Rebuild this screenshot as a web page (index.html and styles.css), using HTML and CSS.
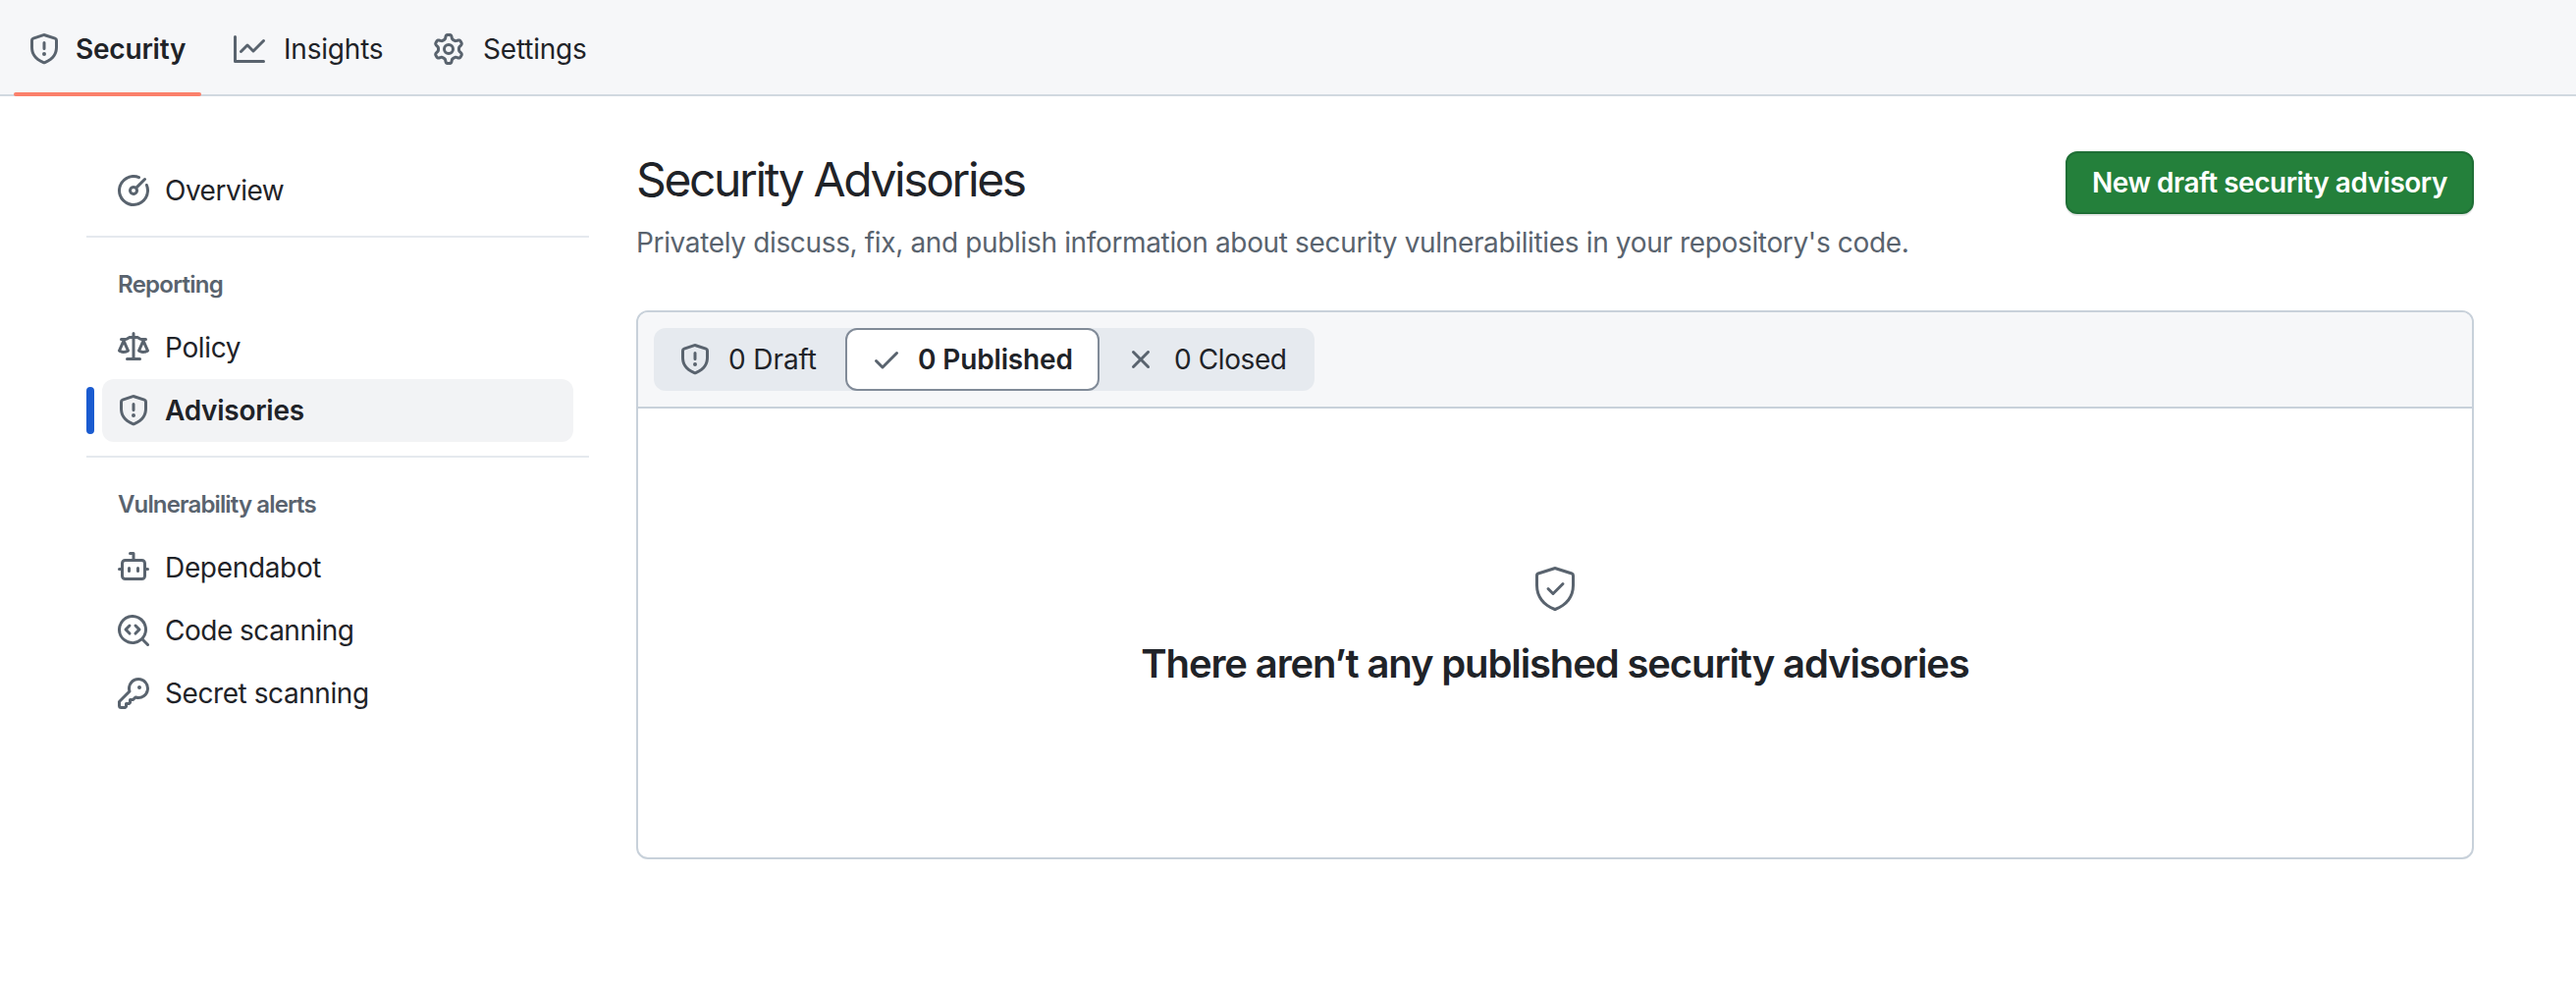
FILE: index.html
```html
<!DOCTYPE html>
<html lang="en">
<head>
<meta charset="utf-8">
<title>Security Advisories</title>
<link rel="stylesheet" href="styles.css">
</head>
<body>
<svg class="sprite" aria-hidden="true">
  <symbol id="shield" viewBox="0 0 16 16"><path d="M7.467.133a1.748 1.748 0 0 1 1.066 0l5.25 1.68A1.75 1.75 0 0 1 15 3.48V7c0 1.566-.32 3.182-1.303 4.682-.983 1.498-2.585 2.813-5.032 3.855a1.697 1.697 0 0 1-1.33 0c-2.447-1.042-4.049-2.357-5.032-3.855C1.32 10.182 1 8.566 1 7V3.48a1.755 1.755 0 0 1 1.217-1.667Zm.61 1.429a.25.25 0 0 0-.153 0l-5.25 1.68a.25.25 0 0 0-.174.238V7c0 1.358.275 2.666 1.057 3.86.784 1.194 2.121 2.34 4.366 3.297a.196.196 0 0 0 .154 0c2.245-.956 3.582-2.104 4.366-3.298C13.225 9.666 13.5 8.36 13.5 7V3.48a.251.251 0 0 0-.174-.237l-5.25-1.68ZM8.75 4.75v3a.75.75 0 0 1-1.5 0v-3a.75.75 0 0 1 1.5 0ZM9 10.5a1 1 0 1 1-2 0 1 1 0 0 1 2 0Z"/></symbol>
</svg>

<nav class="topnav">
  <a class="tab tab-security selected"><svg class="icon"><use href="#shield"/></svg><span>Security</span></a>
  <a class="tab tab-insights"><svg class="icon" viewBox="0 0 16 16"><path d="M1.5 1.75V13.5h13.75a.75.75 0 0 1 0 1.5H.75a.75.75 0 0 1-.75-.75V1.75a.75.75 0 0 1 1.5 0Zm14.28 2.53-5.25 5.25a.75.75 0 0 1-1.06 0L7 7.06 4.28 9.78a.751.751 0 0 1-1.042-.018.751.751 0 0 1-.018-1.042l3.25-3.25a.75.75 0 0 1 1.06 0L10 7.94l4.72-4.72a.751.751 0 0 1 1.042.018.751.751 0 0 1 .018 1.042Z"/></svg><span>Insights</span></a>
  <a class="tab tab-settings"><svg class="icon" viewBox="0 0 16 16"><path d="M8 0a8.2 8.2 0 0 1 .701.031C9.444.095 9.99.645 10.16 1.29l.288 1.107c.018.066.079.158.212.224.231.114.454.243.668.386.123.082.233.09.299.071l1.103-.303c.644-.176 1.392.021 1.82.63.27.385.506.792.704 1.218.315.675.111 1.422-.364 1.891l-.814.806c-.049.048-.098.147-.088.294.016.257.016.515 0 .772-.01.147.038.246.088.294l.814.806c.475.469.679 1.216.364 1.891a7.977 7.977 0 0 1-.704 1.217c-.428.61-1.176.807-1.82.63l-1.102-.302c-.067-.019-.177-.011-.3.071a5.909 5.909 0 0 1-.668.386c-.133.066-.194.158-.211.224l-.29 1.106c-.168.646-.715 1.196-1.458 1.26a8.006 8.006 0 0 1-1.402 0c-.743-.064-1.289-.614-1.458-1.26l-.289-1.106c-.018-.066-.079-.158-.212-.224a5.738 5.738 0 0 1-.668-.386c-.123-.082-.233-.09-.299-.071l-1.103.303c-.644.176-1.392-.021-1.82-.63a8.12 8.12 0 0 1-.704-1.218c-.315-.675-.111-1.422.363-1.891l.815-.806c.05-.048.098-.147.088-.294a6.214 6.214 0 0 1 0-.772c.01-.147-.038-.246-.088-.294l-.815-.806C.635 6.045.431 5.298.746 4.623a7.92 7.92 0 0 1 .704-1.217c.428-.61 1.176-.807 1.82-.63l1.102.302c.067.019.177.011.3-.071.214-.143.437-.272.668-.386.133-.066.194-.158.211-.224l.29-1.106C6.009.645 6.556.095 7.299.03 7.53.01 7.764 0 8 0Zm-.571 1.525c-.036.003-.108.036-.137.146l-.289 1.105c-.147.561-.549.967-.998 1.189-.173.086-.34.183-.5.29-.417.278-.97.423-1.529.27l-1.103-.303c-.109-.03-.175.016-.195.045-.22.312-.412.644-.573.99-.014.031-.021.11.059.19l.815.806c.411.406.562.957.53 1.456a4.709 4.709 0 0 0 0 .582c.032.499-.119 1.05-.53 1.456l-.815.806c-.081.08-.073.159-.059.19.162.346.353.677.573.989.02.03.085.076.195.046l1.102-.303c.56-.153 1.113-.008 1.53.27.161.107.328.204.501.29.447.222.85.629.997 1.189l.289 1.105c.029.109.101.143.137.146a6.6 6.6 0 0 0 1.142 0c.036-.003.108-.036.137-.146l.289-1.105c.147-.561.549-.967.998-1.189.173-.086.34-.183.5-.29.417-.278.97-.423 1.529-.27l1.103.303c.109.029.175-.016.195-.045.22-.313.411-.644.573-.99.014-.031.021-.11-.059-.19l-.815-.806c-.411-.406-.562-.957-.53-1.456a4.709 4.709 0 0 0 0-.582c-.032-.499.119-1.05.53-1.456l.815-.806c.081-.08.073-.159.059-.19a6.464 6.464 0 0 0-.573-.989c-.02-.03-.085-.076-.195-.046l-1.102.303c-.56.153-1.113.008-1.53-.27a4.44 4.44 0 0 0-.501-.29c-.447-.222-.85-.629-.997-1.189l-.289-1.105c-.029-.11-.101-.143-.137-.146a6.6 6.6 0 0 0-1.142 0ZM11 8a3 3 0 1 1-6 0 3 3 0 0 1 6 0ZM9.5 8a1.5 1.5 0 1 0-3.001.001A1.5 1.5 0 0 0 9.5 8Z"/></svg><span>Settings</span></a>
</nav>

<div class="layout">
  <aside class="sidebar">
    <a class="item"><svg class="icon" viewBox="0 0 16 16"><path d="M8 1.5a6.5 6.5 0 1 0 6.016 4.035.75.75 0 0 1 1.388-.57 8 8 0 1 1-4.37-4.37.75.75 0 0 1-.569 1.389A6.479 6.479 0 0 0 8 1.5Zm6.28.22a.75.75 0 0 1 0 1.06l-4.063 4.064a2.5 2.5 0 1 1-1.06-1.06L13.22 1.72a.75.75 0 0 1 1.06 0ZM7 8a1 1 0 1 0 2 0 1 1 0 0 0-2 0Z"/></svg><span class="t-overview">Overview</span></a>
    <hr class="divider">
    <h2 class="group t-reporting"><span>Reporting</span></h2>
    <a class="item"><svg class="icon" viewBox="0 0 16 16"><path d="M8.75.75V2h.985c.304 0 .603.08.867.231l1.29.736c.038.022.08.033.124.033h2.234a.75.75 0 0 1 0 1.5h-.427l2.111 4.692a.75.75 0 0 1-.154.838l-.53-.53.529.531-.001.002-.002.002-.006.006-.006.005-.01.01-.045.04c-.21.176-.441.327-.686.45C14.556 10.78 13.88 11 13 11a4.498 4.498 0 0 1-2.023-.454 3.544 3.544 0 0 1-.686-.45l-.045-.04-.016-.015-.006-.006-.004-.004v-.001a.75.75 0 0 1-.154-.838L12.178 4.5h-.162c-.305 0-.604-.079-.868-.231l-1.29-.736a.245.245 0 0 0-.124-.033H8.75V13h2.5a.75.75 0 0 1 0 1.5h-6.5a.75.75 0 0 1 0-1.5h2.5V3.5h-.984a.245.245 0 0 0-.124.033l-1.289.737c-.265.15-.564.23-.869.23h-.162l2.112 4.692a.75.75 0 0 1-.154.838l-.53-.53.529.531-.001.002-.002.002-.006.006-.016.015-.045.04c-.21.176-.441.327-.686.45C4.556 10.78 3.88 11 3 11a4.498 4.498 0 0 1-2.023-.454 3.544 3.544 0 0 1-.686-.45l-.045-.04-.016-.015-.006-.006-.004-.004v-.001a.75.75 0 0 1-.154-.838L2.178 4.5H1.75a.75.75 0 0 1 0-1.5h2.234a.249.249 0 0 0 .125-.033l1.288-.737c.265-.15.564-.23.869-.23h.984V.75a.75.75 0 0 1 1.5 0Zm2.945 8.477c.285.135.718.273 1.305.273s1.02-.138 1.305-.273L13 6.327Zm-10 0c.285.135.718.273 1.305.273s1.02-.138 1.305-.273L3 6.327Z"/></svg><span class="t-policy">Policy</span></a>
    <a class="item current"><svg class="icon"><use href="#shield"/></svg><span class="t-advisories">Advisories</span></a>
    <hr class="divider">
    <h2 class="group t-alerts"><span>Vulnerability alerts</span></h2>
    <a class="item"><svg class="icon" viewBox="0 0 16 16"><path d="M5.75 7.5a.75.75 0 0 1 .75.75v1.5a.75.75 0 0 1-1.5 0v-1.5a.75.75 0 0 1 .75-.75Zm5.25.75v1.5a.75.75 0 0 1-1.5 0v-1.5a.75.75 0 0 1 1.5 0Z"/><path d="M6.25 0H8a.75.75 0 0 1 .75.75V3.5h3.5a2.25 2.25 0 0 1 2.25 2.25V8h.75a.75.75 0 0 1 0 1.5h-.75v2.75a2.25 2.25 0 0 1-2.25 2.25h-8.5a2.25 2.25 0 0 1-2.25-2.25V9.5H.75a.75.75 0 0 1 0-1.5h.75V5.75A2.25 2.25 0 0 1 3.75 3.5h3.5v-2h-1a.75.75 0 0 1 0-1.5ZM3 5.75v6.5c0 .414.336.75.75.75h8.5a.75.75 0 0 0 .75-.75v-6.5a.75.75 0 0 0-.75-.75h-8.5a.75.75 0 0 0-.75.75Z"/></svg><span class="t-dependabot">Dependabot</span></a>
    <a class="item"><svg class="icon" viewBox="0 0 16 16"><path d="M8.47 4.97a.75.75 0 0 0 0 1.06L9.94 7.5 8.47 8.97a.75.75 0 1 0 1.06 1.06l2-2a.75.75 0 0 0 0-1.06l-2-2a.75.75 0 0 0-1.06 0ZM6.53 6.03a.75.75 0 0 0-1.06-1.06l-2 2a.75.75 0 0 0 0 1.06l2 2a.75.75 0 1 0 1.06-1.06L5.06 7.5l1.47-1.47Z"/><path d="M12.246 13.307a7.501 7.501 0 1 1 1.06-1.06l2.474 2.473a.75.75 0 1 1-1.06 1.06l-2.474-2.473ZM1.5 7.5a6.002 6.002 0 0 0 3.608 5.504 6.002 6.002 0 0 0 6.486-1.117.748.748 0 0 1 .292-.293A6 6 0 1 0 1.5 7.5Z"/></svg><span class="t-code">Code scanning</span></a>
    <a class="item"><svg class="icon" viewBox="0 0 16 16"><path d="M10.5 0a5.499 5.499 0 1 1-1.288 10.848l-.932.932a.749.749 0 0 1-.53.22H7v.75a.749.749 0 0 1-.22.53l-.5.5a.749.749 0 0 1-.53.22H5v.75a.749.749 0 0 1-.22.53l-.5.5a.749.749 0 0 1-.53.22h-2A1.75 1.75 0 0 1 0 14.25v-2c0-.199.079-.389.22-.53l4.932-4.932A5.5 5.5 0 0 1 10.5 0Zm-4 5.5c-.001.431.069.86.205 1.269a.75.75 0 0 1-.181.768L1.5 12.56v1.69c0 .138.112.25.25.25h1.69l.06-.06v-1.19a.75.75 0 0 1 .75-.75h1.19l.06-.06v-1.19a.75.75 0 0 1 .75-.75h1.19l1.023-1.025a.75.75 0 0 1 .768-.18A4 4 0 1 0 6.5 5.5ZM11 6a1 1 0 1 1 0-2 1 1 0 0 1 0 2Z"/></svg><span class="t-secret">Secret scanning</span></a>
  </aside>

  <main class="main">
    <header class="pagehead">
      <div>
        <h1 class="title"><span>Security Advisories</span></h1>
        <p class="subtitle"><span>Privately discuss, fix, and publish information about security vulnerabilities in your repository's code.</span></p>
      </div>
      <button class="primary"><span>New draft security advisory</span></button>
    </header>
    <section class="box">
      <div class="boxhead">
        <div class="segments">
          <a class="segment seg-draft"><svg class="icon"><use href="#shield"/></svg><span>0 Draft</span></a>
          <a class="segment seg-published active"><svg class="icon" viewBox="0 0 16 16"><path d="M13.78 4.22a.75.75 0 0 1 0 1.06l-7.25 7.25a.75.75 0 0 1-1.06 0L2.22 9.28a.751.751 0 0 1 .018-1.042.751.751 0 0 1 1.042-.018L6 10.94l6.72-6.72a.75.75 0 0 1 1.06 0Z"/></svg><span>0 Published</span></a>
          <a class="segment seg-closed"><svg class="icon" viewBox="0 0 16 16"><path d="M3.72 3.72a.75.75 0 0 1 1.06 0L8 6.94l3.22-3.22a.749.749 0 0 1 1.275.326.749.749 0 0 1-.215.734L9.06 8l3.22 3.22a.749.749 0 0 1-.326 1.275.749.749 0 0 1-.734-.215L8 9.06l-3.22 3.22a.751.751 0 0 1-1.042-.018.751.751 0 0 1-.018-1.042L6.94 8 3.72 4.78a.75.75 0 0 1 0-1.06Z"/></svg><span>0 Closed</span></a>
        </div>
      </div>
      <div class="blank">
        <svg class="icon icon-large" viewBox="0 0 24 24"><path d="M16.53 9.78a.75.75 0 0 0-1.06-1.06L11 13.19l-1.97-1.97a.75.75 0 0 0-1.06 1.06l2.5 2.5a.75.75 0 0 0 1.06 0l5-5Z"/><path d="m12.54.637 8.25 2.675A1.75 1.75 0 0 1 22 4.976V10c0 6.19-3.771 10.704-9.401 12.83a1.704 1.704 0 0 1-1.198 0C5.77 20.705 2 16.19 2 10V4.976c0-.758.489-1.43 1.21-1.664L11.46.637a1.748 1.748 0 0 1 1.08 0Zm-.617 1.426-8.25 2.676a.249.249 0 0 0-.173.237V10c0 5.46 3.28 9.483 8.43 11.426a.199.199 0 0 0 .14 0C17.22 19.483 20.5 15.461 20.5 10V4.976a.25.25 0 0 0-.173-.237l-8.25-2.676a.253.253 0 0 0-.154 0Z"/></svg>
        <h3 class="blank-title"><span>There aren’t any published security advisories</span></h3>
      </div>
    </section>
  </main>
</div>
</body>
</html>
```
FILE: styles.css
```css
* { box-sizing: border-box; }

body {
  margin: 0;
  background: #fff;
  color: #1f2328;
  font: 400 28px/42px Inter, "Liberation Sans", sans-serif;
}

h1, h2, h3, p { margin: 0; }

.sprite { display: none; }

.icon {
  flex: none;
  width: 32px;
  height: 32px;
  fill: #59636e;
}

span { white-space: nowrap; }

/* Top navigation */
.topnav {
  display: flex;
  height: 98px;
  padding: 0 14px;
  background: #f6f7f9;
  border-bottom: 2px solid #d1d9e0;
}
.tab {
  display: flex;
  align-items: center;
  gap: 19px;
  height: 98px;
  padding: 6px 15px 0;
  border-bottom: 4px solid transparent;
  letter-spacing: -.2px;
}
.tab.selected {
  position: relative;
  gap: 16px;
  border-bottom: 0;
  padding-bottom: 4px;
  font-weight: 600;
}
.tab.selected::after {
  content: "";
  position: absolute;
  inset: auto 0 0;
  height: 4px;
  border-radius: 2px;
  background: #fb806b;
}
.tab-security { width: 191px; }
.tab-insights { margin-left: 18px; width: 186px; }
.tab-settings { margin-left: 17px; }

/* Page columns */
.layout {
  display: flex;
  gap: 48px;
  padding: 56px 104px 0 88px;
}

/* Sidebar */
.sidebar {
  flex: none;
  width: 512px;
  padding-top: 8px;
}
.item {
  display: flex;
  align-items: center;
  gap: 16px;
  width: 480px;
  height: 64px;
  margin-left: 16px;
  padding: 0 16px;
  border-radius: 12px;
}
.item.current {
  position: relative;
  background: #f2f3f5;
  font-weight: 600;
}
.item.current::before {
  content: "";
  position: absolute;
  left: -16px;
  top: 8px;
  width: 8px;
  height: 48px;
  border-radius: 4px;
  background: #1a5bd0;
}
.t-overview { letter-spacing: -.5px; }
.t-policy { letter-spacing: -.35px; }
.t-advisories { letter-spacing: -.27px; }
.t-dependabot { letter-spacing: -.33px; }
.t-code { letter-spacing: -.5px; }
.t-secret { letter-spacing: -.43px; }
.divider {
  height: 2px;
  margin: 14px 0 0;
  border: 0;
  background: #e5e9ee;
}
.group {
  height: 80px;
  padding: 30px 32px 0;
  font-size: 24px;
  line-height: 36px;
  font-weight: 600;
  color: #59636e;
}
.t-reporting { letter-spacing: -.72px; }
.t-alerts { letter-spacing: -.86px; }

/* Main column */
.main { flex: 1; }
.pagehead {
  display: flex;
  justify-content: space-between;
  align-items: flex-start;
  height: 162px;
}
.title {
  margin-top: -1px;
  font-size: 48px;
  line-height: 60px;
  font-weight: 400;
  letter-spacing: -2.4px;
}
.subtitle {
  margin-top: 13px;
  color: #59636e;
  letter-spacing: -.35px;
}
.primary {
  width: 416px;
  height: 64px;
  padding: 0;
  border: 2px solid #1f6f36;
  border-radius: 12px;
  background: #24803b;
  box-shadow: 0 2px 0 rgba(31, 35, 40, .1);
  color: #fff;
  font: 600 28px/42px Inter, "Liberation Sans", sans-serif;
  letter-spacing: -.5px;
}

.box {
  height: 559px;
  border: 2px solid #c8d1da;
  border-radius: 12px;
  overflow: hidden;
}
.boxhead {
  height: 98px;
  padding: 16px;
  background: #f6f7f9;
  border-bottom: 2px solid #c8d1da;
}
.segments {
  display: flex;
  width: 673px;
  height: 64px;
  border-radius: 12px;
  background: #e6eaef;
}
.segment {
  display: flex;
  align-items: center;
  height: 64px;
}
.seg-draft { width: 195px; padding-left: 26px; gap: 18px; letter-spacing: -.1px; }
.seg-published { width: 259px; padding-left: 24px; gap: 16px; letter-spacing: -.15px; }
.seg-closed { flex: 1; padding-left: 26px; gap: 18px; letter-spacing: -.4px; }
.segment.active {
  border: 2px solid #818b98;
  border-radius: 12px;
  background: #fff;
  font-weight: 600;
}

.blank {
  display: flex;
  flex-direction: column;
  align-items: center;
  padding-top: 160px;
}
.icon-large { width: 48px; height: 48px; }
.blank-title {
  margin-top: 22px;
  font-size: 40px;
  line-height: 60px;
  font-weight: 600;
  letter-spacing: -1.13px;
}
```
